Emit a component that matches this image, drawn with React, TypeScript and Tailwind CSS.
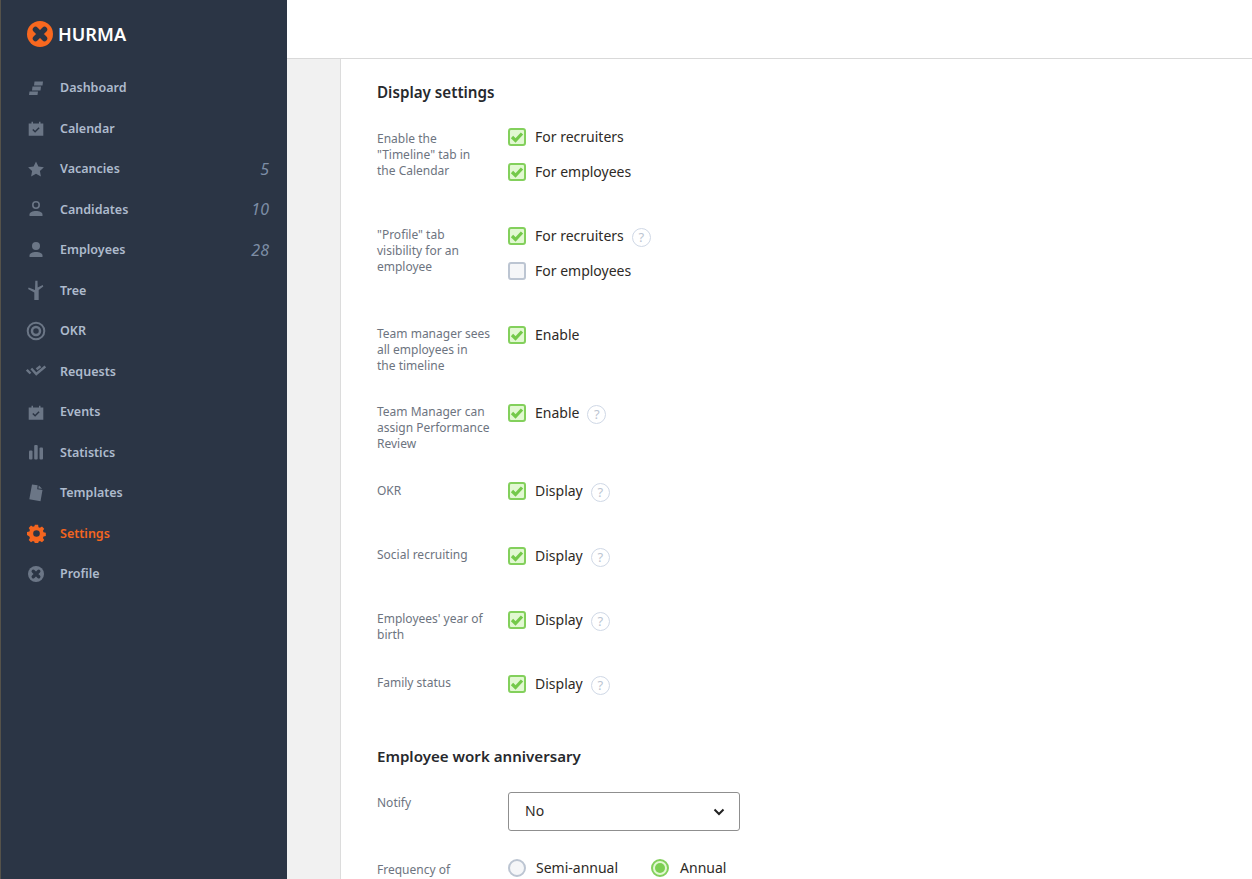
import type { ReactNode } from "react"

function Dash() {
  return (
    <svg viewBox="0 0 20 20" className="h-5 w-5" fill="#6b7686">
      <path d="M8.500 3.500h8.500l-.5 4H8zM6.500 8.500H15l-.5 4H6zM3.500 13.500H12l-.5 3.500H3z" />
    </svg>
  )
}
function Cal() {
  return (
    <svg viewBox="0 0 20 20" className="h-5 w-5" fill="#6b7686">
      <path d="M2.700 5.500h2.800V3.700H7v1.800h6V3.700h1.500v1.800h2.800v12.200H2.700z" />
      <path d="M6.800 11.500l2.300 2.300 4-4" fill="none" stroke="#2b3545" strokeWidth="1.500" />
    </svg>
  )
}
function Star() {
  return (
    <svg viewBox="0 0 20 20" className="h-5 w-5" fill="#6b7686">
      <path d="M10 2.500l2.400 5 5.500.7-4 3.800 1 5.500-4.900-2.700-4.900 2.700 1-5.500-4-3.800 5.500-.7z" />
    </svg>
  )
}
function PersonOutline() {
  return (
    <svg viewBox="0 0 20 20" className="h-5 w-5" fill="#6b7686">
      <circle cx="10" cy="6" r="3.200" fill="none" stroke="#6b7686" strokeWidth="1.600" />
      <path d="M3.500 17v-1.500c0-2 3-3.500 6.500-3.500s6.500 1.500 6.500 3.500V17z" />
    </svg>
  )
}
function Person() {
  return (
    <svg viewBox="0 0 20 20" className="h-5 w-5" fill="#6b7686">
      <circle cx="10" cy="6" r="4" />
      <path d="M3.500 17v-1.500c0-2 3-3.500 6.500-3.500s6.500 1.500 6.500 3.500V17z" />
    </svg>
  )
}
function TreeIcon() {
  return (
    <svg viewBox="0 0 20 22" className="h-[22px] w-5" fill="#6b7686">
      <path d="M9.300 1.700h2.200l.2 6.800 5-2.500.6 1.500-4.600 3.500V21H8.300v-7.500L2 10l.7-1.500L9 11z" />
    </svg>
  )
}
function Target() {
  return (
    <svg viewBox="0 0 20 20" className="h-5 w-5" fill="none" stroke="#6b7686">
      <circle cx="10" cy="10" r="8.300" strokeWidth="2" />
      <circle cx="10" cy="10" r="4" strokeWidth="2.500" />
    </svg>
  )
}
function Checks() {
  return (
    <svg viewBox="0 0 20 20" className="h-5 w-5" fill="none" stroke="#6b7686" strokeWidth="2.400">
      <path d="M.8 8.800l3.700 3.700M5.300 7.500l5 5.500 9-7.500" />
      <path d="M10.500 8.300l4-3" />
    </svg>
  )
}
function Bars() {
  return (
    <svg viewBox="0 0 20 20" className="h-5 w-5" fill="#6b7686">
      <rect x="3" y="8.500" width="3.500" height="9" rx="1" />
      <rect x="8.200" y="3" width="3.500" height="14.500" rx="1" />
      <rect x="13.500" y="5.500" width="3.500" height="12" rx="1" />
    </svg>
  )
}
function Doc() {
  return (
    <svg viewBox="0 0 20 20" className="h-5 w-5" fill="#6b7686">
      <path d="M6 1.500l5.600.8-.4 3.900 5.300.8-2 11.200-11.200-1.900z" />
      <path d="M12.800 2.600l3.300 3.200-3.700-.4z" />
    </svg>
  )
}
function Gear({ color }: { color: string }) {
  return (
    <svg viewBox="0 0 20 20" className="h-[19px] w-[19px]" fill={color}>
      <path
        fillRule="evenodd"
        d="M8.300.800h3.400l.4 2.500 1.500.7 2.200-1.300 2.300 2.400-1.300 2.100.6 1.600 2.400.5v3.400l-2.400.5-.6 1.500 1.300 2.200-2.300 2.300-2.200-1.300-1.500.7-.4 2.400H8.300l-.5-2.400-1.500-.7-2.100 1.300-2.400-2.300 1.300-2.200-.6-1.500L0 11.700V8.300l2.500-.5.600-1.600-1.300-2.100 2.400-2.400 2.100 1.300 1.500-.7zM10 6.500a3.500 3.500 0 100 7 3.500 3.500 0 000-7z"
      />
    </svg>
  )
}
function HurmaMark({ bg, fg, size }: { bg: string; fg: string; size: string }) {
  return (
    <svg viewBox="0 0 26 26" className={size}>
      <circle cx="13" cy="13" r="13" fill={bg} />
      <path d="M8.500 8.500l9 9M17.500 8.500l-9 9" stroke={fg} strokeWidth="5.500" strokeLinecap="round" />
    </svg>
  )
}

const nav: { label: string; icon: ReactNode; count?: string; active?: boolean }[] = [
  { label: "Dashboard", icon: <Dash /> },
  { label: "Calendar", icon: <Cal /> },
  { label: "Vacancies", icon: <Star />, count: "5" },
  { label: "Candidates", icon: <PersonOutline />, count: "10" },
  { label: "Employees", icon: <Person />, count: "28" },
  { label: "Tree", icon: <TreeIcon /> },
  { label: "OKR", icon: <Target /> },
  { label: "Requests", icon: <Checks /> },
  { label: "Events", icon: <Cal /> },
  { label: "Statistics", icon: <Bars /> },
  { label: "Templates", icon: <Doc /> },
  { label: "Settings", icon: <Gear color="#f4651f" />, active: true },
  { label: "Profile", icon: <HurmaMark bg="#6b7686" fg="#2b3545" size="h-4 w-4" /> },
]

function Check({ on = true }: { on?: boolean }) {
  if (!on) return <span className="h-[18px] w-[18px] shrink-0 rounded-[3px] border-2 border-[#bcc5d2] bg-[#f5f6f8]" />
  return (
    <span className="flex h-[18px] w-[18px] shrink-0 items-center justify-center rounded-[3px] border-2 border-[#83d05c] bg-[#e2f8d2]">
      <svg viewBox="0 0 14 14" className="h-[14px] w-[14px]" fill="none" stroke="#74c94a" strokeWidth="3.200">
        <path d="M2 7l3.500 3.500L12 3.500" />
      </svg>
    </span>
  )
}

function Help() {
  return (
    <span className="ml-2 mt-[2px] flex h-[19px] w-[19px] items-center justify-center rounded-full border border-[#cfd8e6] text-[13px] leading-none text-[#bcc5d2]">
      ?
    </span>
  )
}

function Opt({ label, on = true, help = false }: { label: string; on?: boolean; help?: boolean }) {
  return (
    <div className="flex h-[18px] items-center">
      <Check on={on} />
      <span className="ml-[9px] text-[14px] leading-[18px] text-[#2e2a26]">{label}</span>
      {help && <Help />}
    </div>
  )
}

function Row({ label, h, shift = "", children }: { label: ReactNode; h: string; shift?: string; children: ReactNode }) {
  return (
    <div className={`flex ${h}`}>
      <div className="w-[131px] text-[12px] leading-4 text-[#6d7480]">{label}</div>
      <div className={`flex flex-col gap-[17px] ${shift}`}>{children}</div>
    </div>
  )
}

export default function App() {
  return (
    <div className="flex h-[879px] overflow-hidden bg-white font-['Noto_Sans','Open_Sans',sans-serif]">
      <aside className="w-[287px] shrink-0 border-l border-[#55524a] bg-[#2b3545] pl-[25px] pr-[18px]">
        <div className="flex h-[67.500px] items-center pl-px">
          <HurmaMark bg="#f8681f" fg="#2b3545" size="h-[26px] w-[26px]" />
          <span className="ml-[5px] text-[18.200px] font-semibold leading-none text-white">HURMA</span>
        </div>
        <nav>
          {nav.map((n) => (
            <div key={n.label} className="flex h-[40.500px] items-center">
              <span className="flex w-[20px] justify-center">{n.icon}</span>
              <span
                className={
                  n.active
                    ? "ml-[14px] pt-[2px] text-[12.500px] font-semibold text-[#f4651f]"
                    : "ml-[14px] pt-[2px] text-[12.500px] font-semibold text-[#aebbcd]"
                }
              >
                {n.label}
              </span>
              {n.count && <span className="ml-auto text-[16px] italic text-[#7d8da5]">{n.count}</span>}
            </div>
          ))}
        </nav>
      </aside>
      <div className="flex min-w-0 flex-1 flex-col">
        <header className="h-[59px] shrink-0 border-b border-[#d9d9d9] bg-white" />
        <div className="flex min-h-0 flex-1">
          <div className="w-[54px] shrink-0 border-r border-[#dcdcdc] bg-[#f1f1f1]" />
          <main className="flex-1 overflow-hidden pl-[36px] pt-[23px]">
            <h2 className="mb-[29px] text-[15.200px] font-semibold leading-5 text-[#27292d]">Display settings</h2>
            <Row label={<>Enable the<br />"Timeline" tab in<br />the Calendar</>} h="h-[96px]" shift="-mt-[3px]">
              <Opt label="For recruiters" />
              <Opt label="For employees" />
            </Row>
            <Row label={<>"Profile" tab<br />visibility for an<br />employee</>} h="h-[99px]">
              <Opt label="For recruiters" help />
              <Opt label="For employees" on={false} />
            </Row>
            <Row label={<>Team manager sees<br />all employees in<br />the timeline</>} h="h-[78px]">
              <Opt label="Enable" />
            </Row>
            <Row label={<>Team Manager can<br />assign Performance<br />Review</>} h="h-[79px]">
              <Opt label="Enable" help />
            </Row>
            <Row label="OKR" h="h-[64px]" shift="-mt-px">
              <Opt label="Display" help />
            </Row>
            <Row label="Social recruiting" h="h-[64px]">
              <Opt label="Display" help />
            </Row>
            <Row label={<>Employees' year of<br />birth</>} h="h-[64px]">
              <Opt label="Display" help />
            </Row>
            <Row label="Family status" h="h-[71px]">
              <Opt label="Display" help />
            </Row>
            <h2 className="mb-[26px] text-[15.100px] font-semibold leading-5 text-[#27292d]">Employee work anniversary</h2>
            <div className="flex h-[67px]">
              <div className="w-[131px] pt-[3px] text-[12px] leading-4 text-[#6d7480]">Notify</div>
              <div className="flex h-[39px] w-[232px] items-center justify-between rounded-[3px] border border-[#8f8f8f] pl-4 pr-[14px] text-[14px] text-[#2e2a26]">
                <span className="pb-[2px]">No</span>
                <svg viewBox="0 0 12 8" className="h-2 w-3" fill="none" stroke="#222" strokeWidth="2">
                  <path d="M1.500 1.500L6 6l4.500-4.500" />
                </svg>
              </div>
            </div>
            <div className="flex">
              <div className="w-[131px] pt-[3px] text-[12px] leading-4 text-[#6d7480]">Frequency of</div>
              <div className="flex h-[18px] items-center">
                <span className="h-[18px] w-[18px] rounded-full border-2 border-[#bcc5d2] bg-[#f5f6f8]" />
                <span className="ml-[10px] pb-[2px] text-[14px] text-[#2e2a26]">Semi-annual</span>
                <span className="ml-[33px] flex h-[18px] w-[18px] items-center justify-center rounded-full border-2 border-[#83d05c] bg-[#e2f8d2]">
                  <span className="h-[10px] w-[10px] rounded-full bg-[#7ccf52]" />
                </span>
                <span className="ml-[11px] pb-[2px] text-[14px] text-[#2e2a26]">Annual</span>
              </div>
            </div>
          </main>
        </div>
      </div>
    </div>
  )
}
